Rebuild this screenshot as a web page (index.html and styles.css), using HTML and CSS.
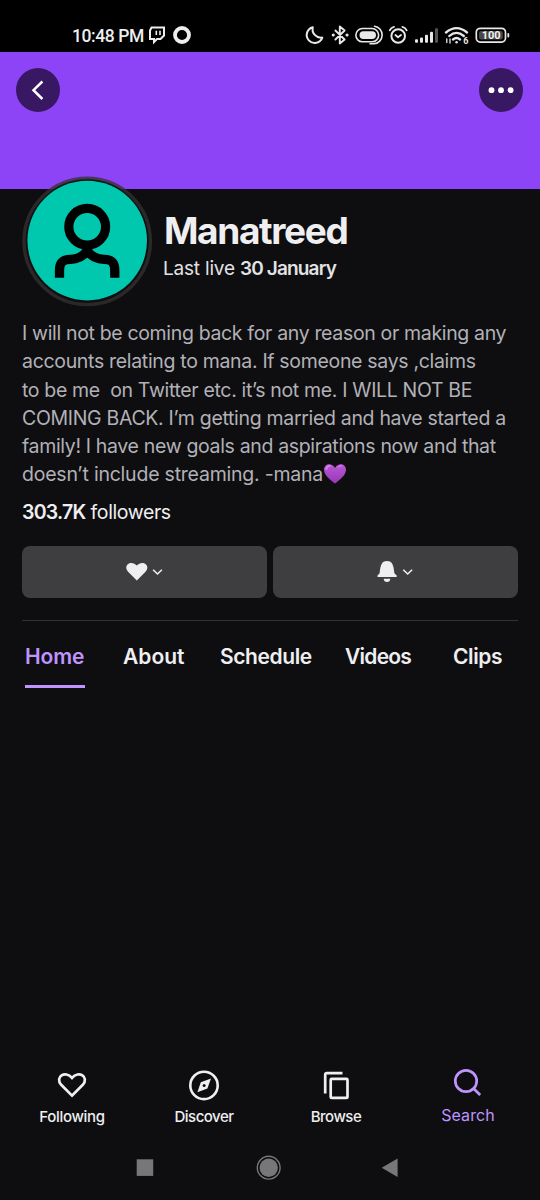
FILE: index.html
```html
<!DOCTYPE html>
<html lang="en">
<head>
<meta charset="utf-8">
<meta name="viewport" content="width=device-width">
<title>Manatreed</title>
<link rel="stylesheet" href="styles.css">
</head>
<body>
<div class="screen">
  <header class="status">
    <span class="clock">10:48 PM</span>
    <svg class="status-left" width="48" height="22" viewBox="0 0 48 22" fill="none" stroke="#eee">
      <path d="M4.5 3.5H17V11.5L13.5 15H10L7 18V15H3V6.5Z" stroke-width="2"/>
      <path d="M9.3 6.8V11M13 6.8V11" stroke-width="1.6"/>
      <circle cx="35" cy="11" r="7" stroke-width="3.8"/>
    </svg>
    <svg class="status-right" width="208" height="24" viewBox="304 23 208 24" fill="none" stroke="#e8e8e8" stroke-width="2" stroke-linecap="round" stroke-linejoin="round">
      <path d="M312.8 27.2A8 8 0 1 0 322.3 37.6A8.5 8.5 0 0 1 312.8 27.2Z"/>
      <path d="M335.4 30.5L344.6 39.5L339.8 43.5V26.5L344.6 30.5L335.4 39.5" stroke-width="1.9"/>
      <path d="M333.2 35H333.3M347 35H347.1" stroke-width="3"/>
      <rect x="359.5" y="31.2" width="16.5" height="7.8" rx="3.9" fill="#e8e8e8" stroke="none"/>
      <path d="M371.5 28.5H362.5A6.5 6.5 0 0 0 362.5 41.8H372A6.6 6.6 0 0 0 372 28.5M374.5 26.3A8.8 8.8 0 0 1 374 43.8H370" stroke-width="1.6"/>
      <circle cx="398.2" cy="36" r="6.8"/>
      <path d="M389.7 30.3Q391 27.5 394 26.8M402.4 26.8Q405.4 27.5 406.7 30.3M395.4 35L398 37.2L401 35" stroke-width="1.8"/>
      <g stroke="none" fill="#e8e8e8">
        <rect x="415" y="39.2" width="3" height="3.6" rx="1"/><rect x="420" y="37.5" width="3" height="5.3" rx="1"/><rect x="425" y="34.7" width="3" height="8.1" rx="1"/><rect x="430" y="31.8" width="3" height="11" rx="1"/><rect x="435" y="28.2" width="3" height="14.6" rx="1" fill="#555"/>
      </g>
      <path d="M446 32.5Q456.5 23.8 467 32.5M449.3 36Q456.5 29.8 463.8 36M453 39.5Q456.5 36.6 460 39.5" stroke-width="2.3"/>
      <path d="M456.5 42.2H456.6" stroke-width="2.4"/>
      <path d="M446.8 38.8V42.5M450 39V43" stroke-width="1.3"/>
      <rect x="476.3" y="28.3" width="29.2" height="13.8" rx="4" stroke-width="1.7"/>
      <rect x="479" y="31" width="23.8" height="8.4" rx="2" fill="#484848" stroke="none"/>
      <path d="M508.3 33.8V36.5" stroke-width="1.8"/>
      <text class="tiny" x="463.3" y="44.3">6</text>
      <text class="battery" x="481.7" y="39.2">100</text>
    </svg>
  </header>

  <div class="banner">
    <button class="round" aria-label="Back"><svg width="44" height="44" viewBox="0 0 44 44" fill="none" stroke="#fff" stroke-width="2.5"><path d="M26.4 13.5L17.5 22.2L26.4 31"/></svg></button>
    <button class="round" aria-label="More"><svg width="44" height="44" viewBox="0 0 44 44" fill="#fff"><circle cx="12.5" cy="22.2" r="2.9"/><circle cx="22" cy="22.2" r="2.9"/><circle cx="31.6" cy="22.2" r="2.9"/></svg></button>
  </div>

  <main class="profile">
    <div class="identity">
      <svg class="avatar" width="132" height="132" viewBox="21 175 132 132">
        <circle cx="87.2" cy="241.3" r="62.5" fill="#0e0e10"/>
        <circle cx="87.2" cy="241.3" r="63.2" fill="none" stroke="#353132" stroke-opacity=".75" stroke-width="3.4"/>
        <circle cx="87.2" cy="240.6" r="59.8" fill="#00c8af"/>
        <circle cx="87.2" cy="226.7" r="18.4" fill="none" stroke="#000" stroke-width="9.2"/>
        <path d="M59.5 277.7V270.5C59.5 262 63.5 259.3 70.5 259.3C78.5 259.3 83 256.6 87.2 250.7C91.4 256.6 96 259.3 104 259.3C111 259.3 114.8 262 114.8 270.5V277.7" fill="none" stroke="#000" stroke-width="9.3"/>
      </svg>
      <div class="names">
        <h1 class="name">Manatreed</h1>
        <p class="last"><span class="last-label">Last live</span> <b class="last-date">30 January</b></p>
      </div>
    </div>

    <p class="bio">
      <span class="line l1">I will not be coming back for any reason or making any</span>
      <span class="line l2">accounts relating to mana. If someone says ,claims</span>
      <span class="line l3">to be me  on Twitter etc. it’s not me. I WILL NOT BE</span>
      <span class="line l4">COMING BACK. I’m getting married and have started a</span>
      <span class="line l5">family! I have new goals and aspirations now and that</span>
      <span class="line l6">doesn’t include streaming. -mana<svg class="emoji" width="24" height="22" viewBox="0 0 24 22"><defs><linearGradient id="purple" x2="0" y2="1"><stop stop-color="#b958d4"/><stop offset="1" stop-color="#9838b8"/></linearGradient></defs><path d="M12 20.5C8.5 18 1 12.5 1 6.8C1 .5 9-.8 12 5C15-.8 23 .5 23 6.8C23 12.5 15.5 18 12 20.5Z" fill="url(#purple)"/><path d="M3.2 6.2Q4 2.8 6.8 2.9" fill="none" stroke="#d286e6" stroke-width="1.8" stroke-linecap="round"/><path d="M15.5 4Q17 2.7 18.5 2.9" fill="none" stroke="#cb77e2" stroke-width="1.5" stroke-linecap="round"/></svg></span>
    </p>

    <p class="followers"><b>303.7K</b> <span>followers</span></p>

    <div class="actions">
      <button class="action" aria-label="Follow options"><svg width="42" height="28" viewBox="123.7 558 42 28"><path d="M136.5 580.6L128 572C121.8 565.3 131.2 559.2 136.5 565.6C141.8 559.2 151.2 565.3 145 572Z" fill="#efeff1"/><path d="M152.8 569.7L157.2 574L161.6 569.7" fill="none" stroke="#efeff1" stroke-width="1.6"/></svg></button>
      <button class="action" aria-label="Notification options"><svg width="42" height="28" viewBox="375 558 42 28"><path d="M377.5 577V575.6L379.6 573.2C380.5 565.6 381.4 561 387 561C392.6 561 393.5 565.6 394.4 573.2L396.7 575.6V577ZM383.7 578.8H390.3Q390 582 387 582Q384 582 383.7 578.8Z" fill="#efeff1"/><path d="M403.3 569.7L407.7 574L412.1 569.7" fill="none" stroke="#efeff1" stroke-width="1.6"/></svg></button>
    </div>

    <nav class="tabs">
      <a class="tab active t1">Home</a><a class="tab t2">About</a><a class="tab t3">Schedule</a><a class="tab t4">Videos</a><a class="tab t5">Clips</a>
    </nav>
  </main>

  <nav class="bottom">
    <a class="item"><svg width="36" height="34" viewBox="54 1068 36 34"><path d="M72 1095.6L61.2 1084.8C54.5 1077.2 65.3 1069.8 72 1077.9C78.7 1069.8 89.5 1077.2 82.8 1084.8Z" fill="none" stroke="#efeff1" stroke-width="2.7"/></svg><span class="n1">Following</span></a>
    <a class="item"><svg width="36" height="34" viewBox="186 1068 36 34"><circle cx="204" cy="1085.4" r="13.7" fill="none" stroke="#efeff1" stroke-width="2.6"/><path d="M197.4 1092.3L200.8 1082.2L211 1078.5L207.4 1088.6Z" fill="#efeff1"/><circle cx="204.1" cy="1085.4" r="1.5" fill="#0e0e10"/></svg><span class="n2">Discover</span></a>
    <a class="item"><svg width="36" height="34" viewBox="318 1068 36 34" fill="none" stroke="#efeff1" stroke-width="2.7"><path d="M325.2 1093.5V1074.8Q325.2 1073.1 326.9 1073.1H342.5"/><rect x="330.7" y="1078.9" width="16.8" height="19" rx="1"/></svg><span class="n3">Browse</span></a>
    <a class="item current"><svg width="36" height="34" viewBox="450 1068 36 34" fill="none" stroke="#bf94ff" stroke-width="2.7"><circle cx="466" cy="1081" r="10.7"/><path d="M473.5 1088.5L480.2 1095"/></svg><span class="n4">Search</span></a>
  </nav>

  <footer class="system">
    <svg width="270" height="30" viewBox="135 1153 270 30" fill="#777"><rect x="136.7" y="1159.3" width="16.5" height="16.6"/><circle cx="268.7" cy="1167.7" r="9.2"/><circle cx="268.7" cy="1167.7" r="11.4" fill="none" stroke="#777" stroke-width="1.4"/><path d="M397.6 1158.5V1177L381.7 1167.8Z"/></svg>
  </footer>
</div>
</body>
</html>
```
FILE: styles.css
```css
* { box-sizing: border-box; }
body { margin: 0; background: #0e0e10; color: #efeff1; font-family: Inter, "Liberation Sans", sans-serif; }
h1, p { margin: 0; }
button { border: 0; padding: 0; display: flex; align-items: center; justify-content: center; }
svg { display: block; flex: none; }
.screen { width: 540px; height: 1200px; display: flex; flex-direction: column; overflow: hidden; }

.status { height: 52px; background: #000; display: flex; padding-top: 23px; padding-left: 72px; }
.clock { width: 75px; font: 500 17.5px/26px Roboto, sans-serif; letter-spacing: -.4px; white-space: nowrap; color: #eee; }
.status-left { margin-top: 1px; }
.status-right { margin-left: 109px; }
.tiny { font: 700 9px Roboto, sans-serif; fill: #e8e8e8; stroke: none; }
.battery { font: 700 11px Roboto, sans-serif; fill: #f2f2f2; stroke: none; }

.banner { height: 137.3px; background: #8d43f6; display: flex; justify-content: space-between; padding: 16.3px 17px 0 16.4px; }
.round { width: 44px; height: 44px; border-radius: 50%; background: #381862; }

.profile { padding: 0 22px; }
.identity { display: flex; height: 117.7px; }
.avatar { margin: -14px 0 0 -1px; position: relative; }
.names { padding: 20px 0 0 11px; white-space: nowrap; }
.name { font-size: 37px; line-height: 44px; font-weight: 700; letter-spacing: -1.35px; }
.last { font-size: 19px; line-height: 28px; margin: 1.5px 0 0 -1px; color: #e2e2e5; letter-spacing: -.2px; }
.last-date { font-weight: 600; letter-spacing: -.85px; }

.bio { margin-top: 12.3px; font-size: 19.5px; line-height: 28.2px; color: #b2b1b8; }
.line { display: block; white-space: pre; height: 28.2px; }
.l1, .l3, .l5 { letter-spacing: -.34px; }
.l2, .l4 { letter-spacing: -.32px; }
.l6 { letter-spacing: -.22px; }
.emoji { display: inline-block; vertical-align: -4px; }
.followers { margin-top: 10px; font-size: 19.5px; line-height: 28px; letter-spacing: -.4px; }
.followers b { font-weight: 600; letter-spacing: -.75px; }

.actions { margin-top: 19.5px; display: grid; grid-template-columns: 1fr 1fr; gap: 6px; }
.action { height: 52px; border-radius: 8px; background: #3e3e40; }

.tabs { margin-top: 22px; border-top: 1px solid #333336; display: flex; padding-top: 20.5px; }
.tab { font-size: 21px; font-weight: 600; line-height: 32px; height: 46.5px; white-space: nowrap; letter-spacing: -.4px; }
.t1 { margin-left: 3px; width: 60px; letter-spacing: -.1px; }
.t2 { margin-left: 38px; width: 63px; letter-spacing: 0; }
.t3 { margin-left: 34px; width: 92px; }
.t4 { margin-left: 33px; width: 68px; letter-spacing: -.75px; }
.t5 { margin-left: 40px; }
.active { color: #bf94ff; border-bottom: 3px solid #bf94ff; }

.bottom { margin-top: auto; height: 72px; padding: 0 6px; display: grid; grid-template-columns: repeat(4, 1fr); }
.item { display: flex; flex-direction: column; align-items: center; font-size: 15px; line-height: 20px; font-weight: 500; }
.item span { margin-top: 4.5px; letter-spacing: -.3px; }
.item .n2, .item .n3 { letter-spacing: -.5px; }
.current { color: #bf94ff; }
.current .n4 { margin-top: 3px; font-size: 16px; font-weight: 400; letter-spacing: .1px; }
.system { height: 60px; padding: 13px 0 0 135px; }
```
